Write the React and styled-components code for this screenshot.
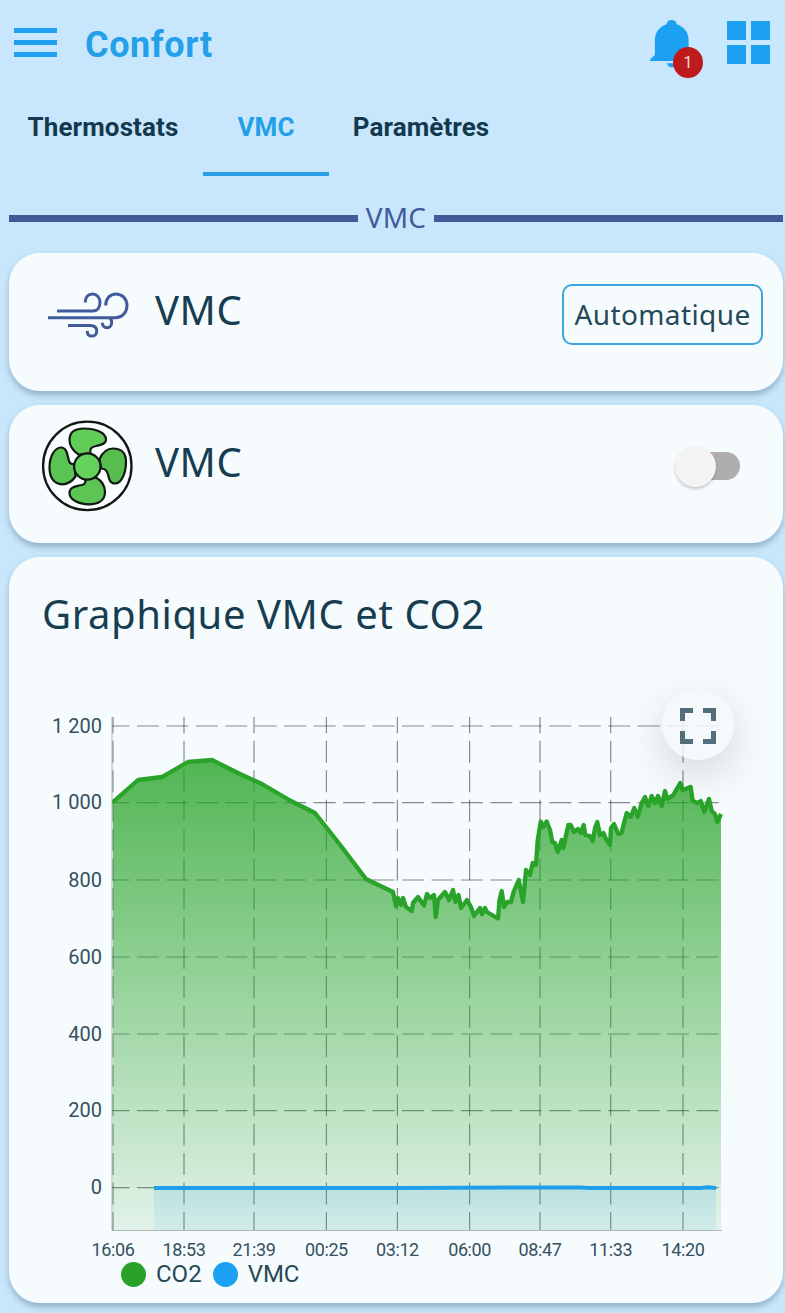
import React from "react";
import styled, { createGlobalStyle } from "styled-components";

const GlobalStyle = createGlobalStyle`
  * {
    box-sizing: border-box;
  }

  body {
    margin: 0;
    background: #c9e7fc;
    color: #173d50;
    font-family: "Noto Sans", sans-serif;
  }
`;

const Page = styled.div`
  width: 785px;
  height: 1313px;
  overflow: hidden;
  background: #c9e7fc;
`;

/* HEADER */
const Header = styled.header`
  display: flex;
  align-items: center;
  height: 88px;
  padding: 0 15px 0 14px;
`;

const MenuButton = styled.button`
  display: flex;
  flex-direction: column;
  gap: 7px;
  width: 43px;
  margin: 0 28px 3px 0;
  padding: 0;
  border: 0;
  background: none;
`;

const MenuBar = styled.span`
  width: 100%;
  height: 5px;
  background: #1e9ff0;
`;

const Title = styled.h1`
  flex: 1;
  margin: 2px 0 0;
  color: #249fea;
  font: 700 36px/44px Roboto, sans-serif;
  letter-spacing: 0.6px;
`;

const BellWrapper = styled.div`
  position: relative;
  width: 44px;
  height: 52px;
  margin: 0 33px 1px 0;

  svg {
    display: block;
  }
`;

const Badge = styled.span`
  position: absolute;
  top: 29px;
  left: 23px;
  width: 30px;
  height: 31px;
  border-radius: 50%;
  background: #bd1a1c;
  color: #f6dede;
  font: 400 16px/31px Roboto, sans-serif;
  text-align: center;
`;

const GridIcon = styled.div`
  display: grid;
  grid-template-columns: 19px 19px;
  grid-auto-rows: 19px;
  gap: 5px;
  margin-bottom: 3px;

  span {
    background: #1ca0f2;
  }
`;

/* TABS */
const Tabs = styled.nav`
  display: flex;
  height: 88px;
  padding-left: 3px;
`;

const Tab = styled.button`
  width: ${(p) => p.$width}px;
  padding: 0 0 6px;
  border: 0;
  border-bottom: 4px solid ${(p) => (p.$active ? "#2b9fe4" : "transparent")};
  background: none;
  color: ${(p) => (p.$active ? "#249fea" : "#12394d")};
  font: 700 26px/74px Roboto, sans-serif;
  letter-spacing: 0.1px;
`;

const Divider = styled.div`
  display: flex;
  align-items: center;
  gap: 8px;
  height: 77px;
  padding: 7px 2px 0 9px;
  color: #415b9b;
  font-size: 28px;

  &::before,
  &::after {
    content: "";
    flex: 1;
    height: 7px;
    background: #3f5b9a;
  }
`;

const DividerLabel = styled.span`
  margin-bottom: 3px;
  letter-spacing: 0.2px;
`;

/* CARDS */
const CardList = styled.main`
  display: flex;
  flex-direction: column;
  gap: 14px;
  padding: 0 2px 0 9px;
`;

const Card = styled.section`
  position: relative;
  height: ${(p) => p.$height || 138}px;
  border-radius: 31px;
  background: #f6fbfe;
  box-shadow: 0 4px 6px rgba(40, 75, 100, 0.34);
`;

const DeviceRow = styled.div`
  display: flex;
  align-items: center;
  height: 122px;
  padding: 0 20px 0 32px;
`;

const DeviceIcon = styled.div`
  width: 92px;
  margin-right: 22px;

  svg {
    display: block;
  }
`;

const DeviceName = styled.h2`
  flex: 1;
  margin: 0 0 8px;
  font-size: 40px;
  font-weight: 400;
  line-height: 54px;
  letter-spacing: 0.6px;
`;

const ModeButton = styled.button`
  width: 201px;
  height: 61px;
  padding: 0;
  border: 2px solid #3fa5dd;
  border-radius: 10px;
  background: transparent;
  color: #264959;
  font: 400 28px/54px "Noto Sans", sans-serif;
  letter-spacing: 0.4px;
`;

const Switch = styled.div`
  display: flex;
  align-items: center;
  width: 62px;
  height: 28px;
  margin-right: 23px;
  border-radius: 14px;
  background: linear-gradient(to right, transparent 20px, #b0adae 20px);
`;

const Knob = styled.span`
  width: 41px;
  height: 41px;
  margin-left: -3px;
  border-radius: 50%;
  background: #f5f4f5;
  box-shadow: 0 2px 3px rgba(0, 0, 0, 0.2);
`;

const ChartTitle = styled.h2`
  height: 103px;
  margin: 0;
  padding: 29px 0 0 33px;
  font-size: 40px;
  font-weight: 400;
  line-height: 56px;
  letter-spacing: 0.58px;
`;

const Chart = styled.svg`
  display: block;
  font-family: Roboto, sans-serif;
  fill: #35505e;
`;

const Legend = styled.div`
  display: flex;
  align-items: center;
  gap: 11px;
  height: 28px;
  padding-left: 112px;
  color: #294856;
  font: 400 24px/26px Roboto, sans-serif;
`;

const LegendItem = styled.div`
  display: flex;
  align-items: center;
  gap: 10px;

  &::before {
    content: "";
    width: 25px;
    height: 25px;
    border-radius: 50%;
    background: ${(p) => p.$color};
  }
`;

const FullscreenButton = styled.button`
  position: absolute;
  top: 132px;
  left: 653px;
  display: flex;
  align-items: center;
  justify-content: center;
  width: 72px;
  height: 71px;
  padding: 3px 0 0;
  border: 0;
  border-radius: 50%;
  background: rgba(246, 248, 251, 0.84);
  box-shadow: 0 14px 44px rgba(0, 0, 0, 0.15);
`;

const BellIcon = () => (
  <svg width="44" height="52" viewBox="0 0 44 52">
    <path
      fill="#1ca0f2"
      d="M16.5 6.2a5.2 5.2 0 0 1 10.2 0C34 8.500 38.600 14.500 38.600 22v15l5.200 4.500V43H.2v-1.500L4.900 37V22c0-7.500 4.500-13.500 11.600-15.800zM17 45.200h10.500a5.300 4.800 0 0 1-10.500 0z"
    />
  </svg>
);

const WindIcon = () => (
  <svg width="92" height="54" viewBox="0 2.6 92 54" fill="none" stroke="#415b9b" strokeWidth="3">
    <path d="M16 26.500h36c4.500 0 7-3.700 7-8.300 0-5-3.200-8.700-7.500-8.700-4.200 0-7.300 3.200-7.300 8.500" />
    <path d="M7 33.300h67.500c6.500 0 11.500-5.100 11.500-12.100S81 9.500 75 9.500c-5.800 0-10.300 4.400-10.300 11.500" />
    <path d="M27 41.200h22c4.200 0 6.700 2.100 6.700 5.300 0 3-2 5.200-4.700 5.200-2.900 0-4.800-1.900-4.800-5.200" />
    <path d="M68.500 33.500c1.600 1 2.200 2.500 2.200 4.400 0 3.100-2 5.400-4.700 5.400-2.900 0-4.700-2-4.700-5" />
  </svg>
);

const FanIcon = () => (
  <svg width="92" height="92" viewBox="0 0 92 92" stroke="#111813" strokeWidth="2.200">
    <circle cx="46.300" cy="45.900" r="44.200" fill="#fafdff" strokeWidth="2.300" />
    <g fill="#62cc58">
      <path d="M37.500 34.500C31 30 28.500 26 28.500 20 28.500 11 35 8.500 43 8.500c12 0 22 4.500 22 11 0 5-6 5.500-10 6.500-5 1-6.500 3-5.500 7.500z" />
      <path d="M58.500 39C62 31.500 66 28.500 72 28.500c9 0 13 5.500 13 13.500 0 12-5 21.500-11 21.500-5 0-6-4.500-7-9s-3-6-7-6z" fill="#56bd4e" />
      <path d="M55 57.500C61 61 64 66 64 72c0 8.500-7 12.300-16 12.300-11 0-19.500-5-19.500-11.300 0-5.500 5-6.500 9.500-7.500 5.500-.5 7-2 6.500-6.500z" fill="#5cc553" />
      <path d="M34.500 56.500C31 61.500 26.500 64.300 21.500 64.300 12.500 64.300 8.500 57 8.500 47.500c0-10.500 5-20 11.500-20 5 0 6 5 7 9.500 1 5.500 2 7.500 6.500 7z" fill="#5ac452" />
    </g>
    <circle cx="46.300" cy="46.500" r="13.200" fill="#66d25e" />
  </svg>
);

const FullscreenIcon = () => (
  <svg width="36" height="36" viewBox="0 0 36 36" fill="none" stroke="#536d7b" strokeWidth="5">
    <path d="M2.500 13V2.500H13M23 2.500h10.500V13M33.500 23v10.500H23M13 33.500H2.500V23" />
  </svg>
);

const yTicks = [
  ["1 200", 726],
  ["1 000", 802.7],
  ["800", 880],
  ["600", 957],
  ["400", 1034],
  ["200", 1110.700],
  ["0", 1187.600],
];

const xTicks = [
  ["16:06", 113],
  ["18:53", 184],
  ["21:39", 254],
  ["00:25", 326.400],
  ["03:12", 397.400],
  ["06:00", 469.600],
  ["08:47", 540],
  ["11:33", 610.700],
  ["14:20", 683],
];

const co2 =
  "113,802 138,780 162,777 188,762 212,760 238,773 262,784 291,801 315,813 341,846 366,879 393,892 396,906 398,898 401,905 403,898 406,907 411.700,911 413,903 418,897 424,905.500 427,894 430,898 434,895 435.700,917 438,900 445,892 449,900 453,890 455.500,902 458.500,895 461,908 467,900 471,907 474,916 480,908 482,914 485,908 487,912 498,918.500 499.500,900 501.700,891 504,907 507,902 511,902 513.500,892 518.700,880 523,902 526,870 530,875 532.700,863 536,865 537.700,840 540.700,821.500 543.300,827 546.700,821.500 550,830 552.300,842 555,843 557.700,852 561.700,840 563.300,848 568.300,825 570.700,825 574,832 578,829 581,833 583.700,825 585.300,835 590,836 592.700,841 595,828 597.300,822 600,835 603.300,833 606,839 610,845 611,828 614,824 618.300,834 621.500,833 624,823 626.700,813 630.700,817 634.300,808 637.700,817 641.700,803 645,797 648.300,806 651.700,796 655,803 658,796 661.700,806 665,791 667.300,799 673.300,795 676.700,789 680.300,783 682.700,790 690.700,787 692.700,801 697.300,803 700.700,801 704.300,812 709,799 711.700,811 715,814 717.300,822 721,814";

const Co2Chart = () => (
  <Chart width="773" height="600" viewBox="9 660 773 600">
    <defs>
      <linearGradient id="co2" gradientUnits="userSpaceOnUse" x1="0" y1="760" x2="0" y2="1230">
        <stop offset="0" stopColor="#28a428" stopOpacity="0.8" />
        <stop offset="1" stopColor="#28a428" stopOpacity="0.1" />
      </linearGradient>
      <linearGradient id="vmc" x1="0" y1="0" x2="0" y2="1">
        <stop offset="0" stopColor="#1ca0f2" stopOpacity="0.14" />
        <stop offset="1" stopColor="#1ca0f2" stopOpacity="0.08" />
      </linearGradient>
    </defs>

    <g stroke="#27342d" strokeOpacity="0.55" strokeWidth="1.200">
      {yTicks.map(([label, y]) => (
        <path key={label} d={`M112 ${y}H719`} strokeDasharray="22 7.450" strokeDashoffset="4.500" />
      ))}
      {xTicks.map(([label, x]) => (
        <path key={label} d={`M${x} 717V1230`} strokeDasharray="22 7.450" strokeDashoffset="5.700" />
      ))}
      <path d="M112 717V1230.500H722" fill="none" stroke="#8a9696" strokeOpacity="0.7" strokeWidth="1" />
    </g>

    <polygon points={`${co2} 721,1230 113,1230`} fill="url(#co2)" />
    <polyline points={co2} fill="none" stroke="#29a329" strokeWidth="4.300" strokeLinejoin="round" />
    <rect x="154" y="1188" width="562" height="42" fill="url(#vmc)" />
    <path d="M154 1188H400L540 1187.500H580L590 1188H700L708 1187.300L716 1188" fill="none" stroke="#209fe8" strokeWidth="4" />

    <g fontSize="20" textAnchor="end">
      {yTicks.map(([label, y]) => (
        <text key={label} x="102" y={y + 6.500}>{label}</text>
      ))}
    </g>
    <g fontSize="18" textAnchor="middle" letterSpacing="-0.4">
      {xTicks.map(([label, x]) => (
        <text key={label} x={x} y="1256">{label}</text>
      ))}
    </g>
  </Chart>
);

const App = () => (
  <Page>
    <GlobalStyle />
    <Header>
      <MenuButton aria-label="Menu">
        <MenuBar />
        <MenuBar />
        <MenuBar />
      </MenuButton>
      <Title>Confort</Title>
      <BellWrapper>
        <BellIcon />
        <Badge>1</Badge>
      </BellWrapper>
      <GridIcon>
        <span />
        <span />
        <span />
        <span />
      </GridIcon>
    </Header>

    <Tabs>
      <Tab $width={200}>Thermostats</Tab>
      <Tab $width={126} $active>VMC</Tab>
      <Tab $width={184}>Paramètres</Tab>
    </Tabs>

    <Divider>
      <DividerLabel>VMC</DividerLabel>
    </Divider>

    <CardList>
      <Card>
        <DeviceRow>
          <DeviceIcon>
            <WindIcon />
          </DeviceIcon>
          <DeviceName>VMC</DeviceName>
          <ModeButton>Automatique</ModeButton>
        </DeviceRow>
      </Card>

      <Card>
        <DeviceRow>
          <DeviceIcon>
            <FanIcon />
          </DeviceIcon>
          <DeviceName>VMC</DeviceName>
          <Switch role="switch" aria-checked="false">
            <Knob />
          </Switch>
        </DeviceRow>
      </Card>

      <Card $height={746}>
        <ChartTitle>Graphique VMC et CO2</ChartTitle>
        <Co2Chart />
        <Legend>
          <LegendItem $color="#28a228">CO2</LegendItem>
          <LegendItem $color="#1ca0f2">VMC</LegendItem>
        </Legend>
        <FullscreenButton aria-label="Plein écran">
          <FullscreenIcon />
        </FullscreenButton>
      </Card>
    </CardList>
  </Page>
);

export default App;
